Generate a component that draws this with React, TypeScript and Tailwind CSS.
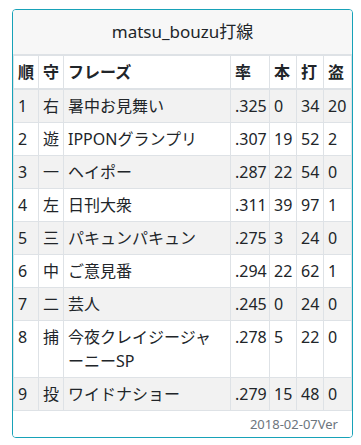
import React from 'react';

const rows: [string, string, React.ReactNode, string, string, string, string][] = [
  ['1', '右', '暑中お見舞い', '.325', '0', '34', '20'],
  ['2', '遊', 'IPPONグランプリ', '.307', '19', '52', '2'],
  ['3', '一', 'ヘイポー', '.287', '22', '54', '0'],
  ['4', '左', '日刊大衆', '.311', '39', '97', '1'],
  ['5', '三', 'パキュンパキュン', '.275', '3', '24', '0'],
  ['6', '中', 'ご意見番', '.294', '22', '62', '1'],
  ['7', '二', '芸人', '.245', '0', '24', '0'],
  ['8', '捕', <>今夜クレイジージャ<br />ーニーSP</>, '.278', '5', '22', '0'],
  ['9', '投', 'ワイドナショー', '.279', '15', '48', '0'],
];

const widths = ['w-[25px]', 'w-[25px]', 'w-[167px]', 'w-[39px]', 'w-[27px]', 'w-[27px]', 'w-[28px]'];
const heads = ['順', '守', 'フレーズ', '率', '本', '打', '盗'];

export default function App() {
  return (
    <div
      className="min-h-screen bg-white pl-[12px] pt-[9px] text-[#212529]"
      style={{ fontFamily: '"Noto Sans", "Noto Sans CJK JP", sans-serif' }}
    >
      <div className="w-[341px] overflow-hidden rounded-[4px] border border-[#17a2b8]">
        <div className="border-b border-[#dee2e6] bg-[#f7f7f7] py-[11px] text-center text-[17px] leading-[22px]">
          matsu_bouzu打線
        </div>
        <table className="w-[339px] table-fixed border-collapse text-[16px] leading-6">
          <colgroup>
            {widths.map((w, i) => (
              <col key={i} className={w} />
            ))}
          </colgroup>
          <thead>
            <tr className="bg-white">
              {heads.map((h) => (
                <th
                  key={h}
                  className="border border-b-2 border-[#dee2e6] p-[4px] text-left align-top font-bold"
                >
                  {h}
                </th>
              ))}
            </tr>
          </thead>
          <tbody>
            {rows.map((r, i) => (
              <tr key={i} className={i % 2 === 0 ? 'bg-[#f2f2f2]' : 'bg-white'}>
                {r.map((c, j) => (
                  <td key={j} className="border border-[#dee2e6] p-[4px] align-top">
                    {c}
                  </td>
                ))}
              </tr>
            ))}
          </tbody>
        </table>
        <div className="bg-white py-[3px] pr-[14px] text-right text-[13px] leading-[20px] text-[#6c757d]">
          2018-02-07Ver
        </div>
      </div>
    </div>
  );
}
